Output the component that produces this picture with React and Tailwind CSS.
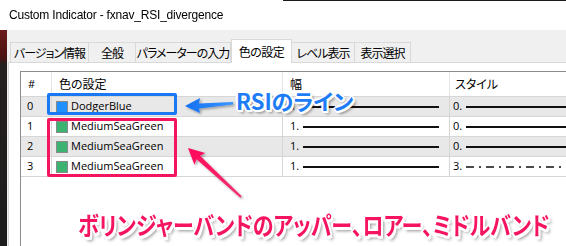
import React from "react";

const ui = "font-['Open_Sans','Noto_Sans_CJK_JP',sans-serif]";
const jp = "font-['Noto_Sans_CJK_JP','Open_Sans',sans-serif] [font-feature-settings:'palt']";

const tabs = [
  { label: "バージョン情報", w: "w-[79px]" },
  { label: "全般", w: "w-[48px]" },
  { label: "パラメーターの入力", w: "w-[96px]" },
  { label: "色の設定", w: "w-[61px]", active: true },
  { label: "レベル表示", w: "w-[64px]" },
  { label: "表示選択", w: "w-[57px]" },
];

const rows = [
  { n: "0", color: "bg-[#1e90ff]", name: "DodgerBlue", width: "1.", style: "0.", dash: false, bg: "bg-[#e8e8e8]" },
  { n: "1", color: "bg-[#3cb371]", name: "MediumSeaGreen", width: "1.", style: "0.", dash: false, bg: "bg-white" },
  { n: "2", color: "bg-[#3cb371]", name: "MediumSeaGreen", width: "1.", style: "0.", dash: false, bg: "bg-[#e8e8e8]" },
  { n: "3", color: "bg-[#3cb371]", name: "MediumSeaGreen", width: "1.", style: "3.", dash: true, bg: "bg-white" },
];

const outline =
  "[text-shadow:1px_1px_0_#fff,-1px_-1px_0_#fff,1px_-1px_0_#fff,-1px_1px_0_#fff,0_2px_0_#fff,2px_0_0_#fff,-2px_0_0_#fff,0_-2px_0_#fff,2px_2px_0_#fff,3px_3px_3px_rgba(0,0,0,0.45)]";

export default function App() {
  return (
    <div className={`relative w-[566px] h-[246px] overflow-hidden bg-white text-black ${ui}`}>
      {/* title bar */}
      <div className="relative h-[30px] bg-white flex items-center pl-[9px]">
        <div className="absolute top-0 left-[283px] right-0 h-px bg-[#1a1a1a]" />
        <span className="text-[12px] tracking-[-0.2px] font-['Liberation_Sans',sans-serif] leading-none whitespace-nowrap scale-y-[1.12]">
          Custom Indicator - fxnav_RSI_divergence
        </span>
      </div>

      {/* body */}
      <div className="flex h-[216px]">
        <div className="w-[7px] shrink-0 bg-[linear-gradient(to_bottom,#6a1a1a_0px,#4a1212_28px,#262020_34px,#1c1c1c_100%)]" />
        <div className="flex-1 flex flex-col bg-[#f0f0f0]">
          {/* tab strip */}
          <div className="h-[32px] flex items-end pl-[3px] shrink-0">
            {tabs.map((t, i) =>
              t.active ? (
                <div
                  key={i}
                  className={`${t.w} h-[24px] -mb-px relative z-10 bg-white border border-b-0 border-[#d9d9d9] flex items-center justify-center whitespace-nowrap text-[12px] tracking-[-0.5px] ${jp}`}
                >
                  {t.label}
                </div>
              ) : (
                <div
                  key={i}
                  className={`${t.w} h-[20px] bg-[#f0f0f0] border border-b-0 border-[#d9d9d9] -ml-px first:ml-0 flex items-center justify-center whitespace-nowrap text-[12px] tracking-[-1px] ${jp}`}
                >
                  {t.label}
                </div>
              )
            )}
          </div>

          {/* panel */}
          <div className="flex-1 ml-px bg-white border-l border-t border-[#d9d9d9] pl-[11px] pt-[8px]">
            <div className="h-full border-l border-t border-[#8c8c8c] bg-white">
              {/* header */}
              <div className="grid grid-cols-[31px_231px_167px_1fr] h-[25px] border-b border-[#d6d6d6] text-[12px]">
                <div className="border-r border-[#e5e5e5] pl-[7px] flex items-center text-[11px]">#</div>
                <div className={`border-r border-[#e5e5e5] pl-[7px] flex items-center ${jp}`}>色の設定</div>
                <div className={`border-r border-[#e5e5e5] pl-[7px] flex items-center ${jp}`}>幅</div>
                <div className={`pl-[5px] flex items-center ${jp}`}>スタイル</div>
              </div>
              {rows.map((r) => (
                <div
                  key={r.n}
                  className={`grid grid-cols-[31px_231px_167px_1fr] h-[20px] border-b border-[#d6d6d6] text-[11px] ${r.bg}`}
                >
                  <div className="border-r border-[#d6d6d6] pl-[6px] flex items-center">{r.n}</div>
                  <div className="border-r border-[#d6d6d6] pl-[4px] flex items-center gap-[3px]">
                    <span className={`w-[12px] h-[12px] border border-[#8a8a8a] ${r.color}`} />
                    <span>{r.name}</span>
                  </div>
                  <div className="border-r border-[#d6d6d6] pl-[7px] flex items-center gap-[4px]">
                    <span>{r.width}</span>
                    <span className="w-[136px] h-[2px] mt-[1px] bg-[#111]" />
                  </div>
                  <div className="pl-[3px] flex items-center gap-[4px]">
                    <span>{r.style}</span>
                    {r.dash ? (
                      <svg width="120" height="4" className="mt-[1px]">
                        <line x1="0" y1="2" x2="120" y2="2" stroke="#111" strokeWidth="1.6" strokeDasharray="8 5 2 5" />
                      </svg>
                    ) : (
                      <span className="flex-1 h-[2px] mt-[1px] bg-[#111]" />
                    )}
                  </div>
                </div>
              ))}
            </div>
          </div>
        </div>
      </div>

      {/* annotations */}
      <div className="absolute left-[47px] top-[93px] w-[130px] h-[22px] border-[3px] border-[#1a78f2] rounded-[2px]" />
      <div className="absolute left-[47px] top-[118px] w-[130px] h-[59px] border-[3px] border-[#f5145f] rounded-[2px]" />

      <svg className="absolute inset-0 pointer-events-none" width="566" height="246">
        <defs>
          <filter id="sh" x="-20%" y="-20%" width="140%" height="140%">
            <feDropShadow dx="1.5" dy="1.5" stdDeviation="1" floodColor="#000" floodOpacity="0.35" />
          </filter>
          <linearGradient id="bl" x1="0" y1="0" x2="1" y2="0">
            <stop offset="0" stopColor="#1470f0" />
            <stop offset="1" stopColor="#3a95ff" />
          </linearGradient>
          <linearGradient id="pk" x1="0" y1="0" x2="1" y2="1">
            <stop offset="0" stopColor="#ff0a5a" />
            <stop offset="1" stopColor="#f03070" />
          </linearGradient>
        </defs>
        <polygon
          filter="url(#sh)"
          fill="url(#bl)"
          points="185,106 200,98 199,103.5 233,102 233,104.5 199,108.5 200,113"
        />
        <polygon
          filter="url(#sh)"
          fill="url(#pk)"
          points="188,148 205.2,153 200,155.7 241.7,196.3 240.3,197.7 196.6,159.3 194.4,164.8"
        />
      </svg>

      <div
        className={`absolute left-[236px] top-[89px] whitespace-nowrap text-[22px] font-bold leading-none text-[#1e7cf6] ${outline} font-['Noto_Sans_CJK_JP',sans-serif] [font-feature-settings:'palt']`}
      >
        RSIのライン
      </div>

      <div
        className={`absolute left-[78px] top-[213px] whitespace-nowrap text-[21px] font-bold leading-none text-[#f5145f] ${outline} font-['Noto_Sans_CJK_JP',sans-serif] [font-feature-settings:'palt'] origin-top-left scale-y-[1.18]`}
      >
        ボリンジャーバンドのアッパー、ロアー、ミドルバンド
      </div>
    </div>
  );
}
